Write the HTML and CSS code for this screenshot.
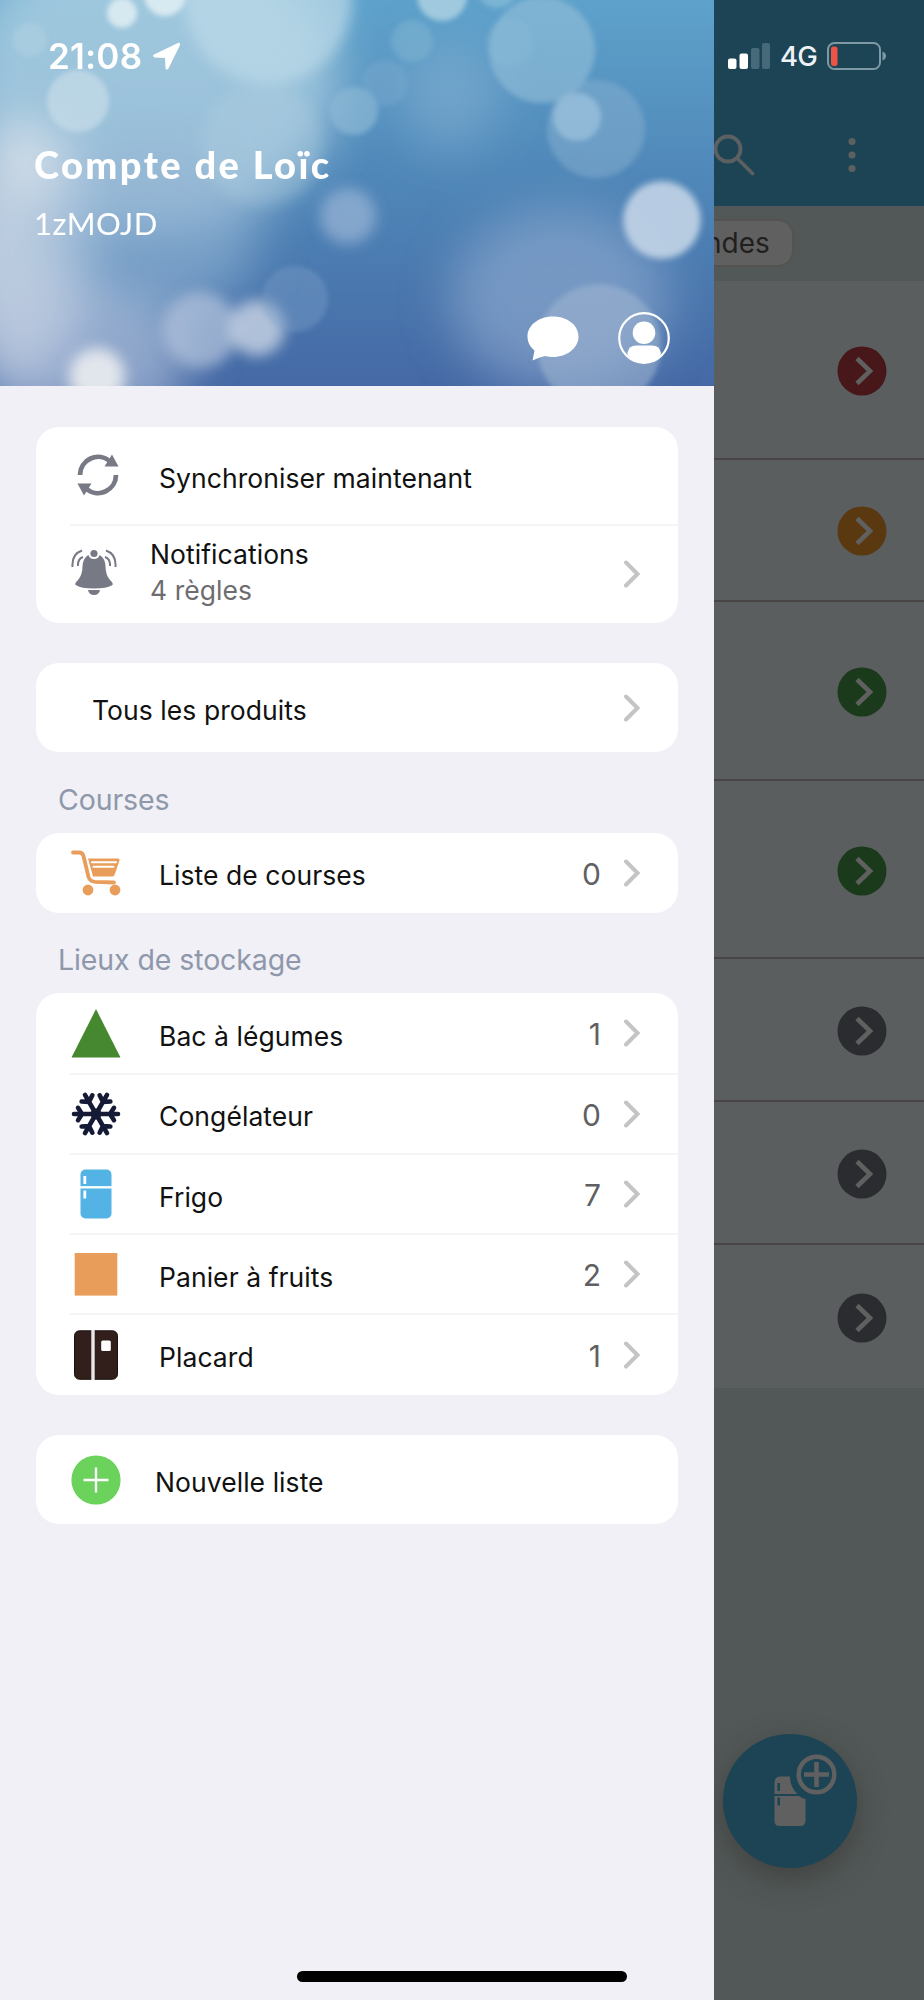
FILE: index.html
```html
<!DOCTYPE html>
<html lang="fr">
<head>
<meta charset="utf-8">
<title>Compte de Loïc</title>
<link rel="stylesheet" href="styles.css">
</head>
<body>
<svg class="defs" width="0" height="0" aria-hidden="true">
  <symbol id="chevron" viewBox="0 0 18 28"><path d="M3 2.500 L14.500 14 L3 25.500" fill="none" stroke="#c4c4c6" stroke-width="4" stroke-linecap="round" stroke-linejoin="miter"/></symbol>
  <symbol id="go" viewBox="0 0 50 50"><circle cx="25" cy="25" r="24.500" fill="currentColor"/><path d="M20 12.500 L33 25 L20 37.500" fill="none" stroke="#606060" stroke-width="4.600"/></symbol>
</svg>
<div class="screen">
  <aside class="drawer">
    <header class="hero">
      <svg class="bokeh" viewBox="0 0 714 386" width="714" height="386" preserveAspectRatio="none">
        <defs>
          <linearGradient id="sky" x1="0" y1="0" x2="0" y2="1"><stop offset="0" stop-color="#5ea2cb"/><stop offset=".45" stop-color="#5088b9"/><stop offset="1" stop-color="#4569a5"/></linearGradient>
          <filter id="b2" x="-50%" y="-50%" width="200%" height="200%"><feGaussianBlur stdDeviation="2.500"/></filter>
          <filter id="b6" x="-50%" y="-50%" width="200%" height="200%"><feGaussianBlur stdDeviation="7"/></filter>
          <filter id="b20" x="-80%" y="-80%" width="260%" height="260%"><feGaussianBlur stdDeviation="24"/></filter>
        </defs>
        <rect width="714" height="386" fill="url(#sky)"/>
        <g filter="url(#b20)">
          <ellipse cx="150" cy="80" rx="190" ry="150" fill="#b9d7e6" opacity=".7"/>
          <ellipse cx="20" cy="250" rx="70" ry="130" fill="#e0e6ed" opacity=".75"/>
          <ellipse cx="150" cy="230" rx="110" ry="90" fill="#93b4d3" opacity=".6"/>
          <ellipse cx="80" cy="360" rx="110" ry="70" fill="#b5c4dd" opacity=".65"/>
          <ellipse cx="560" cy="300" rx="110" ry="90" fill="#93add0" opacity=".6"/>
          <ellipse cx="450" cy="95" rx="50" ry="54" fill="#8bb4d3" opacity=".5"/>
        </g>
        <g filter="url(#b6)">
          <circle cx="268" cy="0" r="84" fill="#bcdae8" opacity=".7"/>
          <circle cx="262" cy="145" r="60" fill="#b3cfe3" opacity=".32"/>
          <circle cx="200" cy="330" r="38" fill="#b5c4dd" opacity=".7"/>
          <circle cx="257" cy="328" r="28" fill="#c2cfe1" opacity=".85"/>
          <circle cx="97" cy="376" r="28" fill="#e6e9ee" opacity=".95"/>
          <circle cx="348" cy="216" r="28" fill="#9bb7d7" opacity=".7"/>
        </g>
        <g filter="url(#b2)">
          <circle cx="662" cy="220" r="41" fill="#c2d4e5" opacity=".4"/>
          <circle cx="662" cy="220" r="37" fill="#c2d4e5" opacity=".85"/>
          <circle cx="542" cy="50" r="53" fill="#94bfd8" opacity=".6"/>
          <circle cx="510" cy="42" r="24" fill="#8fbfd9" opacity=".25"/>
          <circle cx="596" cy="129" r="49" fill="#88b0cf" opacity=".5"/>
          <circle cx="577" cy="117" r="24" fill="#9fc4de" opacity=".7"/>
          <circle cx="354" cy="111" r="24" fill="#8fbad5" opacity=".65"/>
          <circle cx="385" cy="83" r="23" fill="#82afd1" opacity=".35"/>
          <circle cx="412" cy="41" r="21" fill="#82b5d2" opacity=".5"/>
          <circle cx="442" cy="-4" r="25" fill="#b0d3e4" opacity=".8"/>
          <circle cx="497" cy="-12" r="20" fill="#91c2db" opacity=".6"/>
          <circle cx="78" cy="101" r="31" fill="#cbdfe9" opacity=".65"/>
          <circle cx="30" cy="40" r="17" fill="#adcfe0" opacity=".7"/>
          <circle cx="122" cy="13" r="15" fill="#e0eff3" opacity=".85"/>
          <circle cx="165" cy="-5" r="21" fill="#deedf3" opacity=".9"/>
          <circle cx="295" cy="299" r="33" fill="#7d9fc7" opacity=".4"/>
          <circle cx="599" cy="346" r="62" fill="#a0b6d2" opacity=".55"/>
        </g>
      </svg>
      <div class="hero-body">
        <div class="clock"><span>21:08</span>
          <svg width="29" height="29" viewBox="0 0 29 29"><path d="M26 1 L2 12.500 Q-.5 14.500 3 15.500 L13 16 L13.500 26 Q14.500 29 16.500 26.500 L28 3 Q28.500 0 26 1Z" fill="#fff"/></svg>
        </div>
        <h1 class="account">Compte de Loïc</h1>
        <p class="code">1zMOJD</p>
        <div class="actions">
          <svg width="52" height="45" viewBox="0 0 52 45"><path d="M26 .5 C40 .5 51.500 9 51.500 20.500 S40 41 26 41 Q22 41 18 40 Q12 41 5.500 44.500 L7.500 34.500 C3 31 .5 26 .5 20.500 C.5 9 12 .5 26 .5Z" fill="#fff"/></svg>
          <svg width="52" height="52" viewBox="0 0 52 52"><circle cx="26" cy="26" r="24.800" fill="none" stroke="#fff" stroke-width="2.200"/><circle cx="26" cy="20.700" r="11.300" fill="#fff"/><path d="M9.500 43 V40.500 Q11 33.500 18 33.500 H34 Q41.500 33.500 42.800 40.500 V43 Q36 51 26 51 T9.500 43Z" fill="#fff"/></svg>
        </div>
      </div>
    </header>

    <main class="menu">
      <section class="card">
        <div class="row sync">
          <span class="icon"><svg width="42" height="42" viewBox="0 0 42 42"><g fill="none" stroke="#777985" stroke-width="4.800"><path d="M3 21 A18 18 0 0 1 33 7.500"/><path d="M39 21 A18 18 0 0 1 9 34.500"/></g><path d="M35 .5 L41.500 12.500 H27.500Z M.5 29.500 H14.500 L7 41.500Z" fill="#777985"/></svg></span>
          <span class="label">Synchroniser maintenant</span>
        </div>
        <div class="row notif">
          <span class="icon"><svg width="46" height="46" viewBox="0 0 46 46"><g fill="#777985"><circle cx="23" cy="4.500" r="3.600"/><path d="M16 7 Q12 10 11.500 17 Q11.500 26 7 31 Q3.500 34 4.500 36 Q10 39.500 23 39.500 T41.500 36 Q42.500 34 39 31 Q34.500 26 34.500 17 Q34 10 30 7 L28.500 6 Q27.500 10 23 10 T17.500 6Z"/><path d="M17 41 H29 Q28 46 23 46 T17 41Z"/></g><g fill="none" stroke="#777985" stroke-width="2"><path d="M11 1.500 Q.5 5 1.500 18 M12 8 Q6.500 10 7 17 M35 1.500 Q45.500 5 44.500 18 M34 8 Q39.500 10 39 17"/></g></svg></span>
          <span class="label two"><span>Notifications</span><span class="sub">4 règles</span></span>
          <svg class="chev" width="18" height="28"><use href="#chevron"/></svg>
        </div>
      </section>

      <section class="card">
        <div class="row all">
          <span class="label">Tous les produits</span>
          <svg class="chev" width="18" height="28"><use href="#chevron"/></svg>
        </div>
      </section>

      <h2 class="heading">Courses</h2>
      <section class="card">
        <div class="row">
          <span class="icon"><svg width="50" height="46" viewBox="0 0 50 46"><g fill="#e99d5b"><circle cx="17" cy="40" r="5.400"/><circle cx="44" cy="40" r="5.400"/><path d="M17 8.500 H47 Q49 8.500 48.500 10.500 L43.500 25 Q43 26.500 41 26.500 H22Z"/></g><path d="M2 2.500 H8 Q11.500 2.500 12.500 6 L17.500 27 Q19 31.500 24 31.800 L43 32.500" fill="none" stroke="#e99d5b" stroke-width="3.800" stroke-linecap="round" stroke-linejoin="round"/><path d="M21 12.300 H45 M22.500 16.800 H42.500" stroke="#fff" stroke-width="2" stroke-linecap="round"/></svg></span>
          <span class="label">Liste de courses</span><span class="count">0</span>
          <svg class="chev" width="18" height="28"><use href="#chevron"/></svg>
        </div>
      </section>

      <h2 class="heading">Lieux de stockage</h2>
      <section class="card storage">
        <div class="row">
          <span class="icon"><svg width="50" height="50" viewBox="0 0 50 50"><path d="M25 1 L49.500 49.500 H.5Z" fill="#46882f"/></svg></span>
          <span class="label">Bac à légumes</span><span class="count">1</span>
          <svg class="chev" width="18" height="28"><use href="#chevron"/></svg>
        </div>
        <div class="row">
          <span class="icon"><svg width="50" height="50" viewBox="-25 -25 50 50"><g fill="none" stroke="#151a36" stroke-width="4.600" stroke-linecap="round" stroke-linejoin="round"><path id="arm" d="M0 0 H22 M18 -6.200 L14 0 L18 6.200"/><use href="#arm" transform="rotate(60)"/><use href="#arm" transform="rotate(120)"/><use href="#arm" transform="rotate(180)"/><use href="#arm" transform="rotate(240)"/><use href="#arm" transform="rotate(300)"/></g><circle r="5.500" fill="#151a36"/></svg></span>
          <span class="label">Congélateur</span><span class="count">0</span>
          <svg class="chev" width="18" height="28"><use href="#chevron"/></svg>
        </div>
        <div class="row">
          <span class="icon"><svg width="50" height="50" viewBox="0 0 50 50"><rect x="9.500" y=".5" width="31" height="49" rx="5" fill="#52b3e4"/><path d="M9 18.300 H41" stroke="#fff" stroke-width="2.400"/><path d="M13.800 7 V15 M13.800 21.500 V29.500" stroke="#fff" stroke-width="2.800"/></svg></span>
          <span class="label">Frigo</span><span class="count">7</span>
          <svg class="chev" width="18" height="28"><use href="#chevron"/></svg>
        </div>
        <div class="row">
          <span class="icon"><svg width="50" height="50" viewBox="0 0 50 50"><rect x="3.700" y="4" width="42.600" height="42.600" fill="#e99d5b"/></svg></span>
          <span class="label">Panier à fruits</span><span class="count">2</span>
          <svg class="chev" width="18" height="28"><use href="#chevron"/></svg>
        </div>
        <div class="row">
          <span class="icon"><svg width="50" height="50" viewBox="0 0 50 50"><rect x="3.500" y=".8" width="43" height="48.500" rx="5" fill="#321e1a" stroke="#1d110f" stroke-width="1"/><path d="M22 0 V50" stroke="#e9e9ec" stroke-width="3.400"/><rect x="30.200" y="10.500" width="9.600" height="10.600" rx="1.500" fill="#fff"/></svg></span>
          <span class="label">Placard</span><span class="count">1</span>
          <svg class="chev" width="18" height="28"><use href="#chevron"/></svg>
        </div>
      </section>

      <section class="card new">
        <div class="row">
          <span class="icon"><svg width="50" height="50" viewBox="0 0 50 50"><circle cx="25" cy="25" r="24.600" fill="#6bd25c"/><path d="M25 12.500 V37.500 M12.500 25 H37.500" stroke="#fff" stroke-width="2.400"/></svg></span>
          <span class="label">Nouvelle liste</span>
        </div>
      </section>
    </main>
  </aside>

  <div class="behind">
    <div class="topbar">
      <div class="status">
        <svg width="42" height="28" viewBox="0 0 42 28"><g fill="#fff"><rect x="0" y="16.500" width="8.500" height="10.500" rx="2"/><rect x="11.500" y="11.500" width="8.500" height="15.500" rx="2"/></g><g fill="#466a7a"><rect x="23" y="6" width="8.500" height="21" rx="2"/><rect x="34" y="1" width="8" height="26" rx="2"/></g></svg>
        <span class="network">4G</span>
        <svg width="60" height="28" viewBox="0 0 60 28"><rect x="1" y="1" width="52" height="26" rx="6.500" fill="none" stroke="#7c99a5" stroke-width="2"/><rect x="4" y="4.500" width="6.500" height="19.500" rx="2.500" fill="#ec5545"/><path d="M55.500 9.500 Q59 11 59 14 T55.500 18.500Z" fill="#7c99a5"/></svg>
      </div>
      <div class="tools">
        <svg width="42" height="42" viewBox="0 0 42 42"><g fill="none" stroke="#5d6061" stroke-width="3.800" stroke-linecap="round"><circle cx="14" cy="15" r="12.500"/><path d="M23.500 24.500 L38.500 39.500"/></g></svg>
        <svg width="8" height="36" viewBox="0 0 8 36"><g fill="#5d6061"><circle cx="4" cy="4.500" r="3.600"/><circle cx="4" cy="18" r="3.600"/><circle cx="4" cy="31.500" r="3.600"/></g></svg>
      </div>
    </div>
    <div class="filters"><span class="chip">ndes</span></div>
    <div class="items">
      <div class="item tall red"><svg width="50" height="50"><use href="#go"/></svg></div>
      <div class="item orange"><svg width="50" height="50"><use href="#go"/></svg></div>
      <div class="item tall green"><svg width="50" height="50"><use href="#go"/></svg></div>
      <div class="item tall green"><svg width="50" height="50"><use href="#go"/></svg></div>
      <div class="item gray"><svg width="50" height="50"><use href="#go"/></svg></div>
      <div class="item gray"><svg width="50" height="50"><use href="#go"/></svg></div>
      <div class="item gray last"><svg width="50" height="50"><use href="#go"/></svg></div>
    </div>
    <div class="fab">
      <svg width="134" height="134" viewBox="0 0 134 134"><g fill="#606060"><path d="M51.500 60 V48 Q52 43 57 42.500 H67 Q67 53 74.500 60Z"/><path d="M51.500 62 H76 Q79 64.500 82.500 65 V87 Q82 92 77.500 92 H56.500 Q51.500 92 51.500 87Z"/></g><path d="M55.700 49 V57 M55.700 63.500 V71.500" stroke="#1c4455" stroke-width="2.600"/><circle cx="93.500" cy="40.500" r="17.800" fill="none" stroke="#606060" stroke-width="4.400"/><path d="M93.500 28 V53 M81 40.500 H106" stroke="#606060" stroke-width="4.600"/></svg>
    </div>
  </div>
  <div class="home-indicator"></div>
</div>
</body>
</html>
```
FILE: styles.css
```css
* { box-sizing: border-box; }
body { margin: 0; font-family: Inter, "Liberation Sans", sans-serif; }
h1, h2, p { margin: 0; font-weight: 400; }
svg { display: block; flex: none; }
.defs { position: absolute; }
.screen { position: relative; display: flex; width: 924px; height: 2000px; overflow: hidden; }

.drawer { width: 714px; flex: none; background: #f0f0f6; }
.hero { position: relative; height: 386px; overflow: hidden; color: #fff; }
.bokeh { position: absolute; inset: 0; }
.hero-body { position: relative; height: 100%; display: flex; flex-direction: column; padding: 36px 44px 0 34px; }
.clock { display: flex; align-items: center; gap: 10px; height: 40px; padding-left: 14px; font-size: 35px; font-weight: 600; letter-spacing: .2px; }
.account { margin-top: 64px; font: 900 38px/48px Lato, sans-serif; letter-spacing: 2.400px; white-space: nowrap; }
.code { margin-top: 13px; font: 400 31px/44px Lato, sans-serif; letter-spacing: .5px; }
.actions { display: flex; justify-content: flex-end; align-items: center; gap: 39px; margin-top: 67px; }

.menu { padding: 40.500px 36px 0; }
.card { background: #fff; border-radius: 23px; margin-bottom: 40.500px; overflow: hidden; }
.row { position: relative; display: flex; align-items: center; height: 80.300px; padding: 0 37px 0 35px; }
.row + .row::before { content: ""; position: absolute; left: 34px; right: 0; top: -1px; height: 2px; background: #f5f5f7; }
.icon { width: 50px; display: flex; justify-content: center; flex: none; }
.label { flex: 1; margin-left: 38px; padding-top: 5px; font-size: 26.500px; line-height: 36px; letter-spacing: .06px; color: #111; white-space: nowrap; }
.count { margin-right: 22px; padding-top: 2px; font-size: 30px; color: #606062; }
.sync { height: 98px; }
.sync .icon { padding: 0 0 1px 4px; }
.notif { height: 98px; }
.notif .icon { width: 46px; padding-bottom: 3px; }
.notif .label { margin-left: 33px; padding: 0 0 3px; }
.two { display: flex; flex-direction: column; }
.sub { color: #6d6d6f; }
.all { height: 89px; padding-left: 18px; }
.heading { margin: -11px 0 15px 22px; font-size: 28.500px; line-height: 36px; color: #8f98aa; letter-spacing: -.1px; }
.new .row { height: 89px; }
.new .label { margin-left: 34px; }

.behind { position: relative; flex: 1; overflow: hidden; background: #515857; }
.topbar { height: 206px; background: #1c4455; }
.status { display: flex; align-items: center; gap: 10px; padding: 41px 0 0 14px; height: 70px; }
.network { width: 37px; font-size: 27.500px; font-weight: 500; letter-spacing: -.8px; color: #eef2f4; }
.tools { display: flex; align-items: center; gap: 92px; margin-top: 64px; }
.filters { height: 75px; padding-top: 13px; background: #515857; }
.chip { display: flex; align-items: center; width: 80px; height: 48px; border: solid #555352; border-width: 2px 2px 2px 0; border-radius: 0 16px 16px 0; background: #606060; font-size: 28px; color: #1f1f1f; text-indent: -9px; }
.item { display: flex; align-items: center; justify-content: flex-end; height: 142.800px; padding: 3px 37.500px 0 0; background: #5a5e5e; border-bottom: 2px solid #494545; }
.tall { height: 178.500px; }
.last { border: 0; }
.red { color: #471719; }
.orange { color: #5a3810; }
.green { color: #1a3a1b; }
.gray { color: #2b2c2f; }
.fab { position: absolute; left: 9px; top: 1734px; width: 134px; height: 134px; border-radius: 50%; background: #1c4455; box-shadow: 0 10px 28px rgba(50, 45, 42, .5); }
.home-indicator { position: absolute; left: 297px; top: 1971px; width: 330px; height: 11px; border-radius: 6px; background: #000; }
```
